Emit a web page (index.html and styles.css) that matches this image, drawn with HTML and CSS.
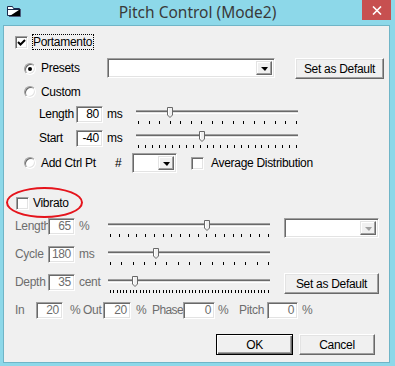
FILE: index.html
```html
<!DOCTYPE html>
<html>
<head>
<meta charset="utf-8">
<title>Pitch Control (Mode2)</title>
<link rel="stylesheet" href="styles.css">
</head>
<body>
<div class="window">
  <div class="titlebar">
    <svg class="appicon" width="14" height="11" viewBox="0 0 14 11"><path d="M0.5 0.5H5.5L6.5 2.5H12.5V9.5H0.5Z" fill="#fff" stroke="#1b2a4e"/><path d="M1 3.5H12" stroke="#1b2a4e"/><path d="M13.5 3V10.5H2" stroke="#4a5a7a"/></svg>
    <div class="title">Pitch Control (Mode2)</div>
    <div class="close"><svg width="10" height="9" viewBox="0 0 10 9"><path d="M1 0.5L9 8.5M9 0.5L1 8.5" stroke="#fff" stroke-width="1.6"/></svg></div>
  </div>
  <div class="client">
    <div class="row r-porta">
      <span class="chk"><svg width="9" height="9" viewBox="0 0 9 9"><path d="M1 4L3.5 6.5L8 2" fill="none" stroke="#000" stroke-width="2"/></svg></span>
      <span class="focus">Portamento</span>
    </div>
    <div class="row r-presets">
      <span class="radio on"></span>
      <span class="rlabel l-presets">Presets</span>
      <span class="combo c-presets"><span class="dropbtn"><span class="arrow"></span></span></span>
      <span class="btn b-def1">Set as Default</span>
    </div>
    <div class="row r-custom">
      <span class="radio"></span>
      <span class="rlabel">Custom</span>
    </div>
    <div class="row r-param">
      <span class="plabel">Length</span>
      <span class="edit e-27">80</span>
      <span class="unit">ms</span>
      <div class="slider s-por">
        <div class="track"></div>
        <div class="ticks"><i></i><i></i><i></i><i></i><i></i><i></i><i></i><i></i><i></i><i></i><i></i><i></i><i></i><i></i><i></i><i></i></div>
        <svg class="thumb" style="left:31px" width="6" height="11" viewBox="0 0 6 11"><path d="M0.5 0.5H5.5V8L3 10.5L0.5 8Z" fill="#f0f0f0" stroke="#696969"/><path d="M1.5 1V8" stroke="#fff"/></svg>
      </div>
    </div>
    <div class="row r-param r-start">
      <span class="plabel">Start</span>
      <span class="edit e-27">-40</span>
      <span class="unit">ms</span>
      <div class="slider s-por">
        <div class="track"></div>
        <div class="ticks"><i></i><i></i><i></i><i></i><i></i><i></i><i></i><i></i><i></i><i></i><i></i><i></i><i></i><i></i><i></i><i></i><i></i><i></i><i></i><i></i><i></i><i></i><i></i><i></i></div>
        <svg class="thumb" style="left:63px" width="6" height="11" viewBox="0 0 6 11"><path d="M0.5 0.5H5.5V8L3 10.5L0.5 8Z" fill="#f0f0f0" stroke="#696969"/><path d="M1.5 1V8" stroke="#fff"/></svg>
      </div>
    </div>
    <div class="row r-ctrl">
      <span class="radio"></span>
      <span class="rlabel l-ctrl">Add Ctrl Pt</span>
      <span class="hash">#</span>
      <span class="combo c-small"><span class="dropbtn"><span class="arrow"></span></span></span>
      <span class="chk chk-avg"></span>
      <span class="avg">Average Distribution</span>
    </div>
    <div class="row r-vib">
      <span class="chk"></span>
      <span class="vib">Vibrato</span>
    </div>
    <div class="row r-v r-vlen">
      <span class="plabel">Length</span>
      <span class="edit e-27">65</span>
      <span class="unit">%</span>
      <div class="slider s-vib">
        <div class="track"></div>
        <div class="ticks"><i></i><i></i><i></i><i></i><i></i><i></i><i></i><i></i><i></i><i></i><i></i><i></i><i></i><i></i><i></i><i></i><i></i><i></i><i></i></div>
        <svg class="thumb" style="left:96px" width="6" height="11" viewBox="0 0 6 11"><path d="M0.5 0.5H5.5V8L3 10.5L0.5 8Z" fill="#f0f0f0" stroke="#696969"/><path d="M1.5 1V8" stroke="#fff"/></svg>
      </div>
      <span class="combo c-vib"><span class="dropbtn"><span class="arrow off"></span></span></span>
    </div>
    <div class="row r-v r-cycle">
      <span class="plabel">Cycle</span>
      <span class="edit e-27">180</span>
      <span class="unit">ms</span>
      <div class="slider s-vib">
        <div class="track"></div>
        <div class="ticks"><i></i><i></i><i></i><i></i><i></i><i></i><i></i><i></i><i></i><i></i><i></i><i></i><i></i><i></i><i></i></div>
        <svg class="thumb" style="left:45px" width="6" height="11" viewBox="0 0 6 11"><path d="M0.5 0.5H5.5V8L3 10.5L0.5 8Z" fill="#f0f0f0" stroke="#696969"/><path d="M1.5 1V8" stroke="#fff"/></svg>
      </div>
    </div>
    <div class="row r-v r-depth">
      <span class="plabel">Depth</span>
      <span class="edit e-27">35</span>
      <span class="unit">cent</span>
      <div class="slider s-vib">
        <div class="track"></div>
        <div class="ticks"><i></i><i></i><i></i><i></i><i></i><i></i><i></i><i></i><i></i><i></i><i></i><i></i><i></i><i></i><i></i><i></i><i></i><i></i><i></i><i></i><i></i><i></i><i></i><i></i><i></i><i></i><i></i><i></i><i></i><i></i><i></i><i></i><i></i><i></i><i></i><i></i><i></i><i></i><i></i><i></i><i></i><i></i><i></i><i></i><i></i><i></i><i></i><i></i><i></i></div>
        <svg class="thumb" style="left:24px" width="6" height="11" viewBox="0 0 6 11"><path d="M0.5 0.5H5.5V8L3 10.5L0.5 8Z" fill="#f0f0f0" stroke="#696969"/><path d="M1.5 1V8" stroke="#fff"/></svg>
      </div>
      <span class="btn b-def2">Set as Default</span>
    </div>
    <div class="row r-io">
      <span class="t t-in">In</span>
      <span class="edit e-27">20</span>
      <span class="t t-p1">%</span>
      <span class="t t-out">Out</span>
      <span class="edit e-28">20</span>
      <span class="t t-p2">%</span>
      <span class="t t-phase">Phase</span>
      <span class="edit e-32">0</span>
      <span class="t t-p3">%</span>
      <span class="t t-pitch">Pitch</span>
      <span class="edit e-31">0</span>
      <span class="t t-p4">%</span>
    </div>
    <div class="row r-ok">
      <span class="btn b-ok">OK</span>
      <span class="btn b-cancel">Cancel</span>
    </div>
    <div class="mark"></div>
  </div>
</div>
</body>
</html>
```
FILE: styles.css
```css
* { box-sizing: border-box; }
html, body { margin: 0; padding: 0; }
body {
  width: 395px; height: 366px; overflow: hidden;
  font-family: "Liberation Sans", Arial, sans-serif;
  font-size: 12px; color: #000;
}
.window {
  width: 395px; height: 366px;
  background: #8dd8e9;
  display: flex; flex-direction: column;
}
.titlebar {
  height: 25px; flex: none; position: relative;
  display: flex; align-items: center; justify-content: center;
}
.appicon { position: absolute; left: 7px; top: 6px; }
.title {
  font-family: "Noto Sans", sans-serif; font-size: 15.5px; color: #3a3a3a;
  margin-top: -1px;
}
.close {
  position: absolute; left: 362px; top: 0; width: 29px; height: 20px;
  background: #c75050;
  display: flex; align-items: center; justify-content: center;
}
.client {
  flex: 1; margin: 0 5px 3px 3px;
  border: 1px solid #6fb5c7;
  background: #f0f0f0;
  display: flex; flex-direction: column;
  position: relative;
  letter-spacing: -0.3px;
}
.row { display: flex; align-items: center; flex: none; }

/* common controls */
.chk {
  width: 13px; height: 13px; flex: none;
  background: #fff;
  border: 1px solid; border-color: #a0a0a0 #fff #fff #a0a0a0;
  box-shadow: inset 1px 1px #696969, inset -1px -1px #e3e3e3;
  display: flex; align-items: center; justify-content: center;
}
.radio {
  width: 12px; height: 12px; flex: none; border-radius: 50%;
  background: #fff;
  border: 1px solid; border-color: #a0a0a0 #fff #fff #a0a0a0;
  box-shadow: inset 1px 1px #696969, inset -1px -1px #e3e3e3;
  display: flex; align-items: center; justify-content: center;
}
.radio.on::after {
  content: ""; width: 4px; height: 4px; border-radius: 50%; background: #000;
}
.edit {
  height: 17px; flex: none;
  background: #fff;
  border: 1px solid; border-color: #a0a0a0 #fff #fff #a0a0a0;
  box-shadow: inset 1px 1px #696969, inset -1px -1px #e3e3e3;
  text-align: right; padding-right: 3px; line-height: 15px;
}
.e-27 { width: 27px; }
.e-28 { width: 28px; }
.e-31 { width: 31px; }
.e-32 { width: 32px; }
.btn {
  flex: none; display: flex; align-items: center; justify-content: center;
  background: #f0f0f0;
  border: 1px solid; border-color: #fff #696969 #696969 #fff;
  box-shadow: inset -1px -1px #a0a0a0, inset 1px 1px #e3e3e3;
}
.combo {
  flex: none; height: 20px; background: #fff;
  border: 1px solid; border-color: #a0a0a0 #fff #fff #a0a0a0;
  box-shadow: inset 1px 1px #696969, inset -1px -1px #e3e3e3;
  display: flex; justify-content: flex-end; padding: 2px;
}
.dropbtn {
  width: 16px; height: 100%;
  background: #f0f0f0;
  border: 1px solid; border-color: #e3e3e3 #696969 #696969 #e3e3e3;
  box-shadow: inset -1px -1px #a0a0a0, inset 1px 1px #fff;
  display: flex; align-items: center; justify-content: center;
}
.arrow {
  width: 0; height: 0;
  border-left: 4px solid transparent; border-right: 3px solid transparent;
  border-top: 4px solid #000;
  margin-top: 1px;
}
.arrow.off { border-top-color: #a0a0a0; }

/* sliders */
.slider { position: relative; flex: none; width: 162px; height: 17px; }
.track {
  margin-top: 3px; height: 4px;
  border-top: 1px solid #a0a0a0; border-bottom: 1px solid #fff;
  background: linear-gradient(#696969 0 1px, #e3e3e3 1px 2px);
}
.ticks {
  margin-top: 7px; height: 3px; padding: 0 1px 0 2px;
  display: flex; justify-content: space-between;
}
.ticks i { display: block; width: 1px; height: 3px; background: #000; }
.thumb { position: absolute; top: 0; }

/* rows */
.r-porta { margin-top: 8px; height: 16px; padding-left: 11px; }
.focus { margin-left: 4px; border: 1px dotted #000; padding: 0 1px 0 0; line-height: 14px; }

.r-presets { margin-top: 8px; height: 21px; padding-left: 20px; align-items: flex-start; }
.r-presets .radio { margin-top: 5px; }
.rlabel { margin-left: 5px; }
.l-presets { width: 66px; line-height: 21px; }
.c-presets { width: 168px; }
.b-def1 { width: 89px; height: 21px; margin-left: 20px; }

.r-custom { margin-top: 5px; height: 16px; padding-left: 20px; }

.r-param { margin-top: 6px; height: 18px; padding-left: 35px; align-items: flex-start; }
.plabel { width: 37px; line-height: 17px; flex: none; white-space: nowrap; }
.unit { margin-left: 4px; width: 29px; line-height: 17px; flex: none; }
.r-param .slider { margin-top: 1px; }

.r-ctrl { margin-top: 5px; height: 20px; padding-left: 20px; }
.l-ctrl { width: 74px; }
.hash { width: 17px; }
.c-small { width: 45px; }
.chk-avg { margin-left: 14px; }
.avg { margin-left: 7px; }

.r-vib { margin-top: 22px; height: 16px; padding-left: 12px; }
.vib { margin-left: 4px; }

.r-v { padding-left: 11px; align-items: flex-start; color: #6d6d6d; }
.r-v .plabel { width: 33px; }
.r-v .slider { margin-top: 2px; }
.r-vlen { margin-top: 7px; height: 20px; }
.c-vib { width: 95px; margin-left: 14px; height: 20px; }
.r-cycle { margin-top: 8px; height: 18px; }
.r-depth { margin-top: 9px; height: 21px; }
.r-depth .plabel, .r-depth .unit, .r-depth .edit { margin-top: 1px; }
.r-depth .slider { margin-top: 3px; }
.b-def2 { width: 95px; height: 21px; margin-left: 14px; color: #000; }

.r-io { margin-top: 8px; height: 17px; padding-left: 11px; color: #6d6d6d; }
.t { flex: none; line-height: 17px; white-space: nowrap; }
.t-in { width: 21px; }
.t-p1 { margin-left: 7px; width: 13px; }
.t-out { width: 20px; }
.t-p2 { margin-left: 5px; width: 16px; }
.t-phase { width: 31px; letter-spacing: -0.6px; }
.t-p3 { margin-left: 3px; width: 21px; }
.t-pitch { width: 28px; }
.t-p4 { margin-left: 4px; }

.r-ok { margin-top: 15px; height: 21px; padding-left: 212px; }
.b-ok {
  width: 77px; height: 21px;
  border-color: #000;
  box-shadow: inset 1px 1px #fff, inset -1px -1px #696969, inset -2px -2px #a0a0a0;
}
.b-cancel { width: 76px; height: 21px; margin-left: 6px; }

.mark {
  position: absolute; left: 2px; top: 161px; width: 77px; height: 31px;
  border: 2.5px solid #e5141c; border-radius: 50%;
}
```
